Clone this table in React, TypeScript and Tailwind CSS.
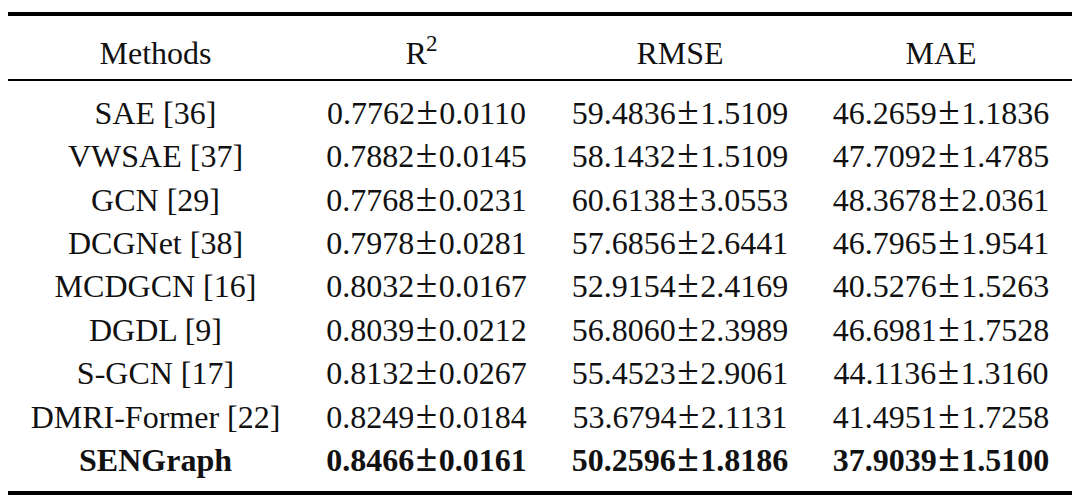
import React from "react";

const rows: { m: string; r2: [string, string]; rmse: [string, string]; mae: [string, string]; bold?: boolean }[] = [
  { m: "SAE [36]", r2: ["0.7762", "0.0110"], rmse: ["59.4836", "1.5109"], mae: ["46.2659", "1.1836"] },
  { m: "VWSAE [37]", r2: ["0.7882", "0.0145"], rmse: ["58.1432", "1.5109"], mae: ["47.7092", "1.4785"] },
  { m: "GCN [29]", r2: ["0.7768", "0.0231"], rmse: ["60.6138", "3.0553"], mae: ["48.3678", "2.0361"] },
  { m: "DCGNet [38]", r2: ["0.7978", "0.0281"], rmse: ["57.6856", "2.6441"], mae: ["46.7965", "1.9541"] },
  { m: "MCDGCN [16]", r2: ["0.8032", "0.0167"], rmse: ["52.9154", "2.4169"], mae: ["40.5276", "1.5263"] },
  { m: "DGDL [9]", r2: ["0.8039", "0.0212"], rmse: ["56.8060", "2.3989"], mae: ["46.6981", "1.7528"] },
  { m: "S-GCN [17]", r2: ["0.8132", "0.0267"], rmse: ["55.4523", "2.9061"], mae: ["44.1136", "1.3160"] },
  { m: "DMRI-Former [22]", r2: ["0.8249", "0.0184"], rmse: ["53.6794", "2.1131"], mae: ["41.4951", "1.7258"] },
  { m: "SENGraph", r2: ["0.8466", "0.0161"], rmse: ["50.2596", "1.8186"], mae: ["37.9039", "1.5100"], bold: true },
];

function PM({ v }: { v: [string, string] }) {
  return (
    <span className="whitespace-nowrap">
      {v[0]}
      <span className="mx-[1.5px] text-[39px] leading-[0]">±</span>
      {v[1]}
    </span>
  );
}

export default function App() {
  return (
    <div
      className="w-[1080px] h-[501px] bg-white pl-[8px] pt-[12px] text-[32px] text-[#111]"
      style={{ fontFamily: '"Liberation Serif", "Times New Roman", serif' }}
    >
      <div className="w-[1064px]">
        <div className="h-[4px] bg-black" />
        <div className="grid grid-cols-[295px_247px_260px_262px] pt-[15.5px] leading-[43.4px] text-center">
          <div>Methods</div>
          <div className="pr-[10px]">
            R<sup className="text-[23px] top-[-13px] -ml-[1px]">2</sup>
          </div>
          <div>RMSE</div>
          <div>MAE</div>
        </div>
        <div className="mt-[4px] h-[2px] bg-black" />
        <div className="pt-[11px]">
          {rows.map((r) => (
            <div
              key={r.m}
              className={`grid grid-cols-[295px_247px_260px_262px] h-[43.4px] leading-[43.4px] text-center ${r.bold ? "font-bold" : ""}`}
            >
              <div className="whitespace-nowrap">{r.m}</div>
              <div>
                <PM v={r.r2} />
              </div>
              <div>
                <PM v={r.rmse} />
              </div>
              <div>
                <PM v={r.mae} />
              </div>
            </div>
          ))}
        </div>
        <div className="mt-[8.5px] h-[4px] bg-black" />
      </div>
    </div>
  );
}
